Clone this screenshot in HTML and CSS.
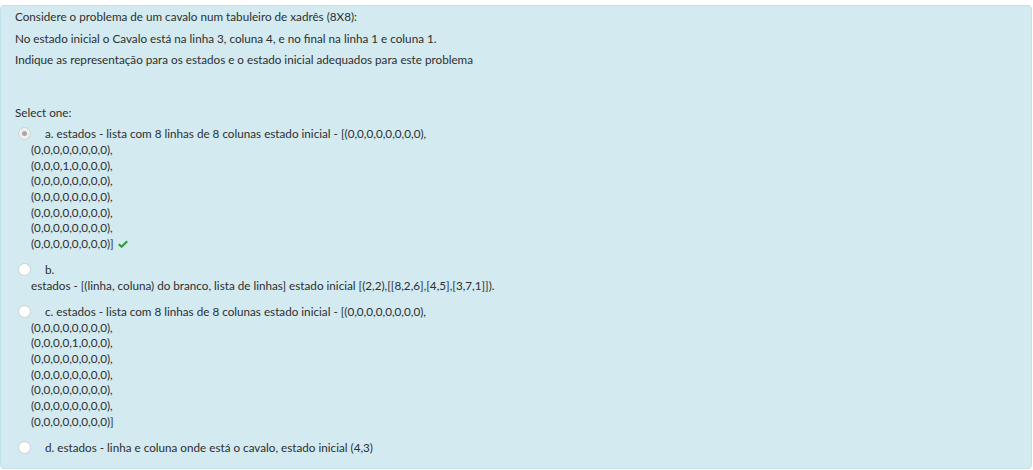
FILE: index.html
```html
<!DOCTYPE html>
<html lang="pt">
<head>
<meta charset="utf-8">
<title>Questão</title>
<link rel="stylesheet" href="styles.css">
</head>
<body>
<div class="formulation">
  <div class="qtext">
    <p>Considere o problema de um cavalo num tabuleiro de xadrês (8X8):</p>
    <p>No estado inicial o Cavalo está na linha 3, coluna 4, e no final na linha 1 e coluna 1.</p>
    <p>Indique as representação para os estados e o estado inicial adequados para este problema</p>
  </div>
  <div class="ablock">
    <div class="prompt">Select one:</div>
    <div class="answer">
      <div class="option">
        <span class="radio radio-checked"></span><span class="label">a. estados - lista com 8 linhas de 8 colunas estado inicial - [(0,0,0,0,0,0,0,0),<br>(0,0,0,0,0,0,0,0),<br>(0,0,0,1,0,0,0,0),<br>(0,0,0,0,0,0,0,0),<br>(0,0,0,0,0,0,0,0),<br>(0,0,0,0,0,0,0,0),<br>(0,0,0,0,0,0,0,0),<br>(0,0,0,0,0,0,0,0)]</span><svg class="check" width="10" height="8" viewBox="0 0 10 8"><path d="M0.8 4.2 L3.6 6.8 L9.2 1.2" fill="none" stroke="#2e9a3a" stroke-width="2"/></svg>
      </div>
      <div class="option">
        <span class="radio"></span><span class="label">b.<br>estados - [(linha, coluna) do branco, lista de linhas] estado inicial [(2,2),[[8,2,6],[4,5],[3,7,1]]).</span>
      </div>
      <div class="option">
        <span class="radio"></span><span class="label">c. estados - lista com 8 linhas de 8 colunas estado inicial - [(0,0,0,0,0,0,0,0),<br>(0,0,0,0,0,0,0,0),<br>(0,0,0,0,1,0,0,0),<br>(0,0,0,0,0,0,0,0),<br>(0,0,0,0,0,0,0,0),<br>(0,0,0,0,0,0,0,0),<br>(0,0,0,0,0,0,0,0),<br>(0,0,0,0,0,0,0,0)]</span>
      </div>
      <div class="option">
        <span class="radio"></span><span class="label">d. estados - linha e coluna onde está o cavalo, estado inicial (4,3)</span>
      </div>
    </div>
  </div>
</div>
</body>
</html>
```

FILE: styles.css
```css
html, body {
  margin: 0;
  padding: 0;
  background: #ffffff;
}

body {
  padding-top: 5px;
  font-family: "Lato", "Open Sans", sans-serif;
  font-size: 11.7px;
  color: #2f2f2f;
}

.formulation {
  box-sizing: border-box;
  width: 1032px;
  height: 464px;
  background: #d2eaf0;
  border: 1px solid #bfe3ea;
  border-radius: 4px;
  padding: 0 14px 0 14px;
}

.qtext p {
  margin: 0;
  line-height: 21.5px;
}

.ablock {
  margin-top: 34.6px;
  line-height: 15.7px;
}

.prompt {
  margin-bottom: 5.3px;
}

.option {
  padding-left: 16px;
  margin-bottom: 10.4px;
}

.radio {
  display: inline-block;
  box-sizing: border-box;
  width: 13px;
  height: 13px;
  margin-left: -13px;
  margin-right: 14px;
  border-radius: 50%;
  background: #ffffff;
  border: 1px solid #c9d0d3;
  vertical-align: -2px;
  position: relative;
}

.radio-checked {
  background: #efefef;
  border-color: #d0d3d4;
}

.radio-checked::after {
  content: "";
  position: absolute;
  left: 3px;
  top: 3px;
  width: 5px;
  height: 5px;
  border-radius: 50%;
  background: #a9a9a9;
}

.check {
  margin-left: 4px;
  vertical-align: 0;
}
```
